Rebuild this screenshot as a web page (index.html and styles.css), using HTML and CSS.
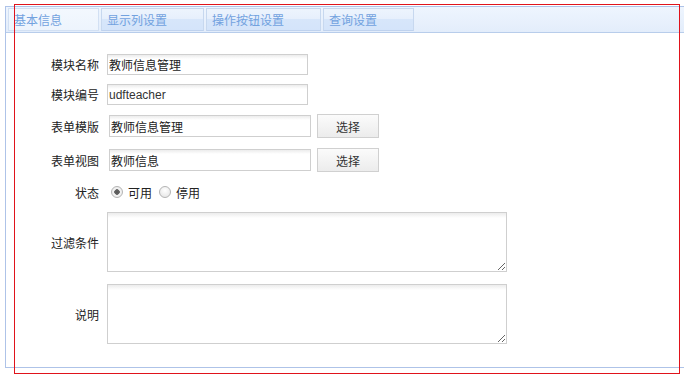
FILE: index.html
```html
<!DOCTYPE html>
<html lang="zh-CN">
<head>
<meta charset="UTF-8">
<title>模块设置</title>
<link rel="stylesheet" href="styles.css">
</head>
<body>
<div class="panel">
  <div class="tabs">
    <div class="tab tab-active">基本信息</div>
    <div class="tab tab-w2">显示列设置</div>
    <div class="tab tab-w3">操作按钮设置</div>
    <div class="tab">查询设置</div>
  </div>

  <div class="form">
    <div class="row row-1">
      <span class="label">模块名称</span>
      <input class="field" type="text" value="教师信息管理">
    </div>
    <div class="row row-2">
      <span class="label">模块编号</span>
      <input class="field" type="text" value="udfteacher">
    </div>
    <div class="row row-3">
      <span class="label">表单模版</span>
      <input class="field field-pick" type="text" value="教师信息管理">
      <button class="btn">选择</button>
    </div>
    <div class="row row-4">
      <span class="label">表单视图</span>
      <input class="field field-pick" type="text" value="教师信息">
      <button class="btn">选择</button>
    </div>
    <div class="row row-5">
      <span class="label">状态</span>
      <label class="radio"><input type="radio" name="state" checked> 可用</label>
      <label class="radio"><input type="radio" name="state"> 停用</label>
    </div>
    <div class="row row-6">
      <span class="label">过滤条件</span>
      <textarea class="area"></textarea>
    </div>
    <div class="row row-7">
      <span class="label">说明</span>
      <textarea class="area"></textarea>
    </div>
  </div>
</div>

<!-- selection outline drawn over the panel -->
<div class="outline"></div>
</body>
</html>
```

FILE: styles.css
```css
html, body {
  margin: 0;
  padding: 0;
  overflow: hidden;
  background: #fff;
}
body {
  font-family: "Noto Sans CJK SC", "Liberation Sans", sans-serif;
  font-size: 12px;
  color: #222;
  height: 374px;
}
.panel {
  margin: 6px 0 0 5px;
  height: 362px;
  box-sizing: border-box;
  border-left: 1px solid #aec3e8;
  border-bottom: 1px solid #aec3e8;
  display: flex;
  flex-direction: column;
}
.tabs {
  display: flex;
  gap: 2px;
  height: 27px;
  box-sizing: border-box;
  padding: 1px 0 0 2px;
  border-top: 1px solid #aec3e8;
  border-bottom: 1px solid #b8cdeb;
  background: linear-gradient(#eef5fe, #e3edfb);
}
.tab {
  width: 91px;
  height: 23px;
  box-sizing: border-box;
  padding-left: 5px;
  line-height: 22px;
  color: #72a2df;
  border: 1px solid #c7d8ef;
  border-bottom-color: #bfd2ee;
  background: linear-gradient(#edf4fd 0, #e6effc 50%, #d7e6fa 50%, #d4e4fa 100%);
}
.tab-w2 {
  width: 103px;
}
.tab-w3 {
  width: 115px;
}
.tab-active {
  background: linear-gradient(#f3f8fe, #edf4fd);
  border-color: #d2e0f3;
}
.form {
  padding-top: 21px;
  display: flex;
  flex-direction: column;
}
.row {
  display: flex;
  align-items: center;
}
.row-2 { margin-top: 9px; }
.row-3 { margin-top: 9px; }
.row-4 { margin-top: 10px; }
.row-5 { margin-top: 12px; height: 16px; }
.row-6 { margin-top: 12px; }
.row-7 { margin-top: 12px; }
.label {
  width: 93px;
  margin-right: 8px;
  text-align: right;
  color: #222;
  white-space: nowrap;
}
.field {
  width: 201px;
  height: 21px;
  box-sizing: border-box;
  margin: 0;
  padding: 0 1px;
  border: 1px solid #cfcfcf;
  background: linear-gradient(#ececec 0, #fff 4px);
  font-family: "Noto Sans CJK SC", "Liberation Sans", sans-serif;
  font-size: 12px;
  color: #222;
  outline: none;
}
.row-2 .field {
  font-family: "Liberation Sans", "Noto Sans CJK SC", sans-serif;
  font-size: 12px;
  color: #333;
}
.field-pick {
  width: 202px;
  height: 22px;
  margin-left: 2px;
}
.btn {
  width: 62px;
  height: 24px;
  margin: 0 0 0 6px;
  padding: 0;
  box-sizing: border-box;
  border: 1px solid #d0d0d0;
  background: linear-gradient(#fbfbfb, #ececec);
  font-family: "Noto Sans CJK SC", sans-serif;
  font-size: 12px;
  color: #333;
}
.radio {
  display: inline-flex;
  align-items: center;
  gap: 5px;
  margin: 0 7px 0 4px;
  color: #222;
}
.radio + .radio {
  margin-left: 0;
}
.radio input {
  appearance: none;
  -webkit-appearance: none;
  width: 12px;
  height: 12px;
  margin: 0;
  border: 1px solid #b4b4b4;
  border-radius: 50%;
  background: radial-gradient(circle at 50% 35%, #fff, #e2e2e2);
  box-sizing: border-box;
}
.radio input:checked {
  background: radial-gradient(circle, #555 0, #666 2.5px, #f4f4f4 3px, #e6e6e6 100%);
}
.area {
  width: 400px;
  height: 60px;
  box-sizing: border-box;
  margin: 0;
  border: 1px solid #cfcfcf;
  background: linear-gradient(#ececec 0, #fff 5px);
  font-family: "Noto Sans CJK SC", sans-serif;
  font-size: 12px;
  outline: none;
}
.outline {
  position: absolute;
  left: 14px;
  top: 4px;
  width: 666px;
  height: 370px;
  box-sizing: border-box;
  border: 1px solid #e0131b;
  pointer-events: none;
}
```
